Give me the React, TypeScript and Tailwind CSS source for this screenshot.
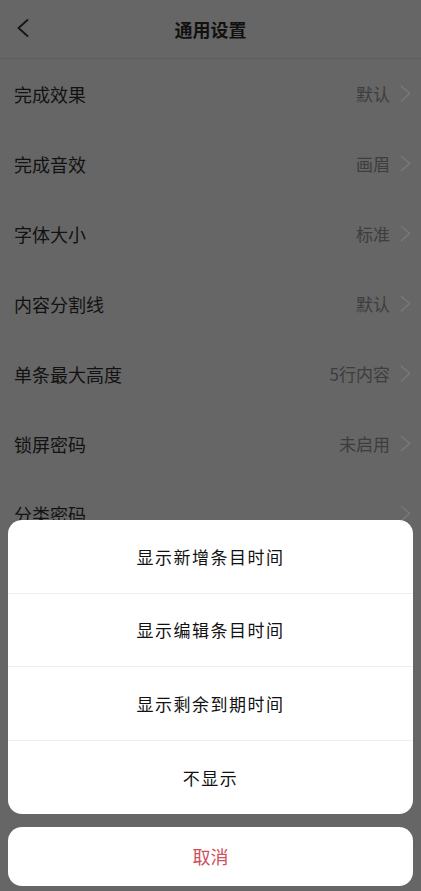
const rows = [
  { label: "完成效果", value: "默认" },
  { label: "完成音效", value: "画眉" },
  { label: "字体大小", value: "标准" },
  { label: "内容分割线", value: "默认" },
  { label: "单条最大高度", value: "5行内容" },
  { label: "锁屏密码", value: "未启用" },
  { label: "分类密码", value: "" },
  { label: "显示时间", value: "" },
];

const options = ["显示新增条目时间", "显示编辑条目时间", "显示剩余到期时间", "不显示"];

function Chevron({ dir, className }: { dir: "left" | "right"; className?: string }) {
  return (
    <svg viewBox="0 0 12 18" fill="none" className={className} aria-hidden="true">
      <polyline
        points={dir === "left" ? "10.5,1 1.5,9 10.5,17" : "1.5,1 10.5,9 1.5,17"}
        stroke="currentColor"
        strokeWidth={dir === "left" ? 1.8 : 1.4}
        strokeLinecap="round"
        strokeLinejoin="round"
      />
    </svg>
  );
}

export default function App() {
  return (
    <div
      className="relative h-[891px] w-full overflow-hidden bg-[#666666]"
      style={{ fontFamily: '"Noto Sans CJK SC", "Noto Sans", sans-serif' }}
    >
      {/* 页面（遮罩下） */}
      <header className="relative flex h-[59px] items-center justify-center border-b border-[#5e5e5e]">
        <Chevron dir="left" className="absolute left-[17px] top-[19px] h-[18px] w-[12px] text-[#161616]" />
        <h1 className="text-[18px] font-bold text-[#111]">通用设置</h1>
      </header>
      <div className="flex flex-col">
        {rows.map((r) => (
          <div key={r.label} className="flex h-[70px] items-center pl-[14px] pr-[10px]">
            <span className="flex-1 text-[18px] text-[#121212]">{r.label}</span>
            <span className="text-[17px] text-[#3d3d3d]">{r.value}</span>
            <Chevron dir="right" className="mb-[2px] ml-[10px] h-[17px] w-[11px] text-[#7a7a7a]" />
          </div>
        ))}
      </div>

      {/* 底部弹出菜单 */}
      <div className="absolute inset-x-[8px] bottom-[5px] flex flex-col gap-[13px]">
        <div className="overflow-hidden rounded-[14px] bg-white">
          {options.map((o, i) => (
            <div
              key={o}
              className={`flex h-[73.5px] items-center justify-center text-[17px] tracking-[1.5px] text-[#111] ${
                i < options.length - 1 ? "border-b border-[#efefef]" : ""
              }`}
            >
              {o}
            </div>
          ))}
        </div>
        <div className="flex h-[59px] items-center justify-center rounded-[14px] bg-white text-[18px] text-[#cf4f5a]">
          取消
        </div>
      </div>
    </div>
  );
}
